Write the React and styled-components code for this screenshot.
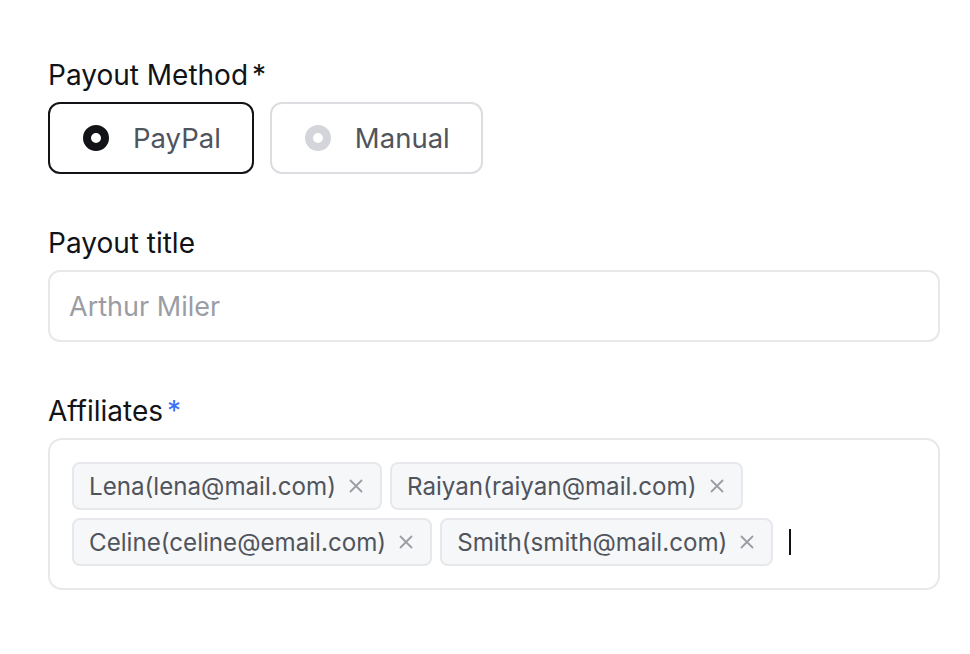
import React from "react";
import styled, { createGlobalStyle } from "styled-components";

const GlobalStyle = createGlobalStyle`
  body {
    margin: 0;
    background: #fff;
    font-family: Inter, "Noto Sans", sans-serif;
  }
`;

const affiliates = [
  "Lena(lena@mail.com)",
  "Raiyan(raiyan@mail.com)",
  "Celine(celine@email.com)",
  "Smith(smith@mail.com)",
];

const App = () => {
  return (
    <>
      <GlobalStyle />
      <Form>
        <Field>
          <Label>
            Payout Method<Star>*</Star>
          </Label>
          <RadioRow>
            <RadioCard $checked>
              <Dot $checked />
              PayPal
            </RadioCard>
            <RadioCard>
              <Dot />
              Manual
            </RadioCard>
          </RadioRow>
        </Field>

        <Field>
          <Label>Payout title</Label>
          <Input placeholder="Arthur Miler" />
        </Field>

        <Field>
          <Label>
            Affiliates<Star $blue>*</Star>
          </Label>
          <TagBox>
            {affiliates.map((name) => (
              <Tag key={name}>
                {name}
                <Remove>
                  <svg width="16" height="16" viewBox="0 0 16 16" fill="none">
                    <path
                      d="M2.5 2.5l11 11M13.5 2.5l-11 11"
                      stroke="currentColor"
                      strokeWidth="1.8"
                      strokeLinecap="round"
                    />
                  </svg>
                </Remove>
              </Tag>
            ))}
            <Caret />
          </TagBox>
        </Field>
      </Form>
    </>
  );
};

export default App;

const Form = styled.div`
  padding: 57px 30px 40px 48px;
  display: flex;
  flex-direction: column;
  gap: 51px;
`;

const Field = styled.div`
  display: flex;
  flex-direction: column;
  gap: 9px;
`;

const Label = styled.label`
  font-size: 28px;
  line-height: 36px;
  color: #111317;
  font-weight: 400;
  display: flex;
`;

const Star = styled.span`
  margin-left: 4px;
  color: ${(p) => (p.$blue ? "#3d6ef5" : "#111317")};
`;

const RadioRow = styled.div`
  display: flex;
  gap: 16px;
`;

const RadioCard = styled.div`
  box-sizing: border-box;
  height: 72px;
  padding: 0 31px 0 33px;
  display: flex;
  align-items: center;
  gap: 24px;
  border-radius: 12px;
  border: 2px solid ${(p) => (p.$checked ? "#111317" : "#dcdde0")};
  font-size: 27.5px;
  color: #50545c;
`;

const Dot = styled.span`
  box-sizing: border-box;
  width: 26px;
  height: 26px;
  border-radius: 50%;
  border: 8px solid ${(p) => (p.$checked ? "#111317" : "#d4d5da")};
  background: #fff;
`;

const Input = styled.input`
  box-sizing: border-box;
  height: 72px;
  width: 100%;
  border: 2px solid #e8e8ea;
  border-radius: 12px;
  padding: 0 19px;
  font-family: Inter, "Noto Sans", sans-serif;
  font-size: 27px;
  color: #111317;
  outline: none;

  &::placeholder {
    color: #9a9da4;
  }
`;

const TagBox = styled.div`
  box-sizing: border-box;
  border: 2px solid #e8e8ea;
  border-radius: 14px;
  padding: 22px;
  display: flex;
  flex-wrap: wrap;
  align-items: center;
  gap: 8px;
`;

const Tag = styled.div`
  box-sizing: border-box;
  height: 48px;
  display: flex;
  align-items: center;
  gap: 12px;
  padding: 0 16px 0 15px;
  background: #f6f7f9;
  border: 2px solid #e6e8eb;
  border-radius: 8px;
  font-size: 24.15px;
  color: #50545c;
`;

const Remove = styled.span`
  display: flex;
  color: #9a9da4;
`;

const Caret = styled.span`
  width: 2px;
  height: 26px;
  margin-left: 8px;
  background: #111317;
`;
